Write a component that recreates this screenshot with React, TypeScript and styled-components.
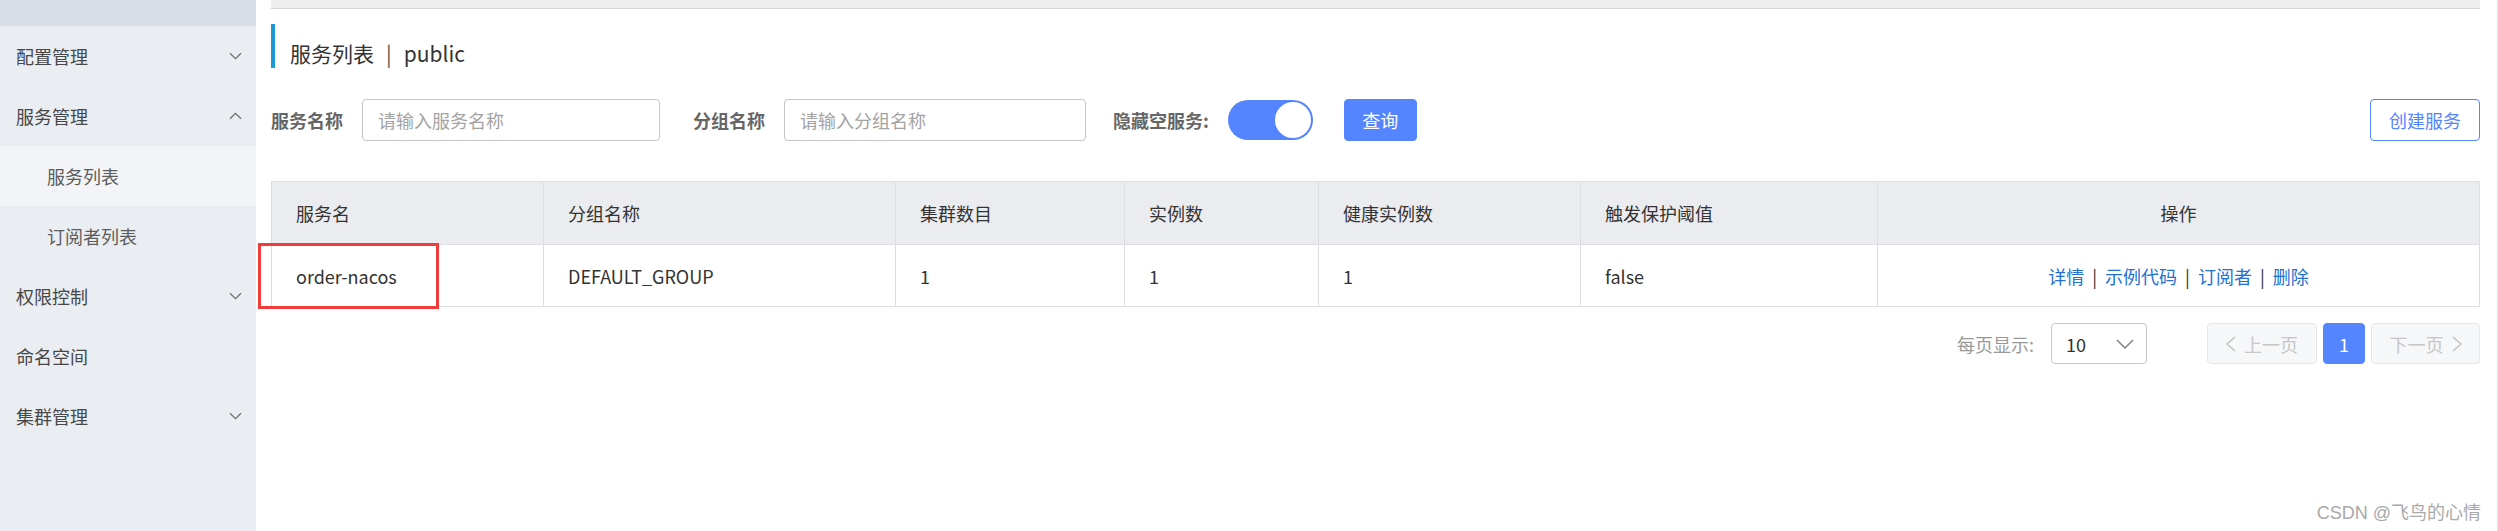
import React from "react";
import styled, { createGlobalStyle } from "styled-components";

const GlobalStyle = createGlobalStyle`
  html, body { margin: 0; padding: 0; background: #fff; }
  body { font-family: "Noto Sans CJK SC", "Noto Sans", sans-serif; }
  * { box-sizing: border-box; }
`;

const Page = styled.div`
  position: relative;
  display: flex;
  width: 2498px;
  height: 531px;
  overflow: hidden;
  background: #fff;
  border-right: 1px solid #e2e2e2;
`;

const Sidebar = styled.nav`
  width: 256px;
  flex: none;
  background: #eaedf1;
  display: flex;
  flex-direction: column;
`;

const SideTop = styled.div`
  height: 26px;
  background: #d9dde5;
`;

const MenuItem = styled.div<{ $sub?: boolean; $active?: boolean }>`
  height: 60px;
  display: flex;
  align-items: center;
  justify-content: space-between;
  padding: 0 14px 0 ${(p) => (p.$sub ? "47px" : "16px")};
  font-size: 18px;
  color: ${(p) => (p.$sub ? "#5c5c5c" : "#474747")};
  background: ${(p) => (p.$active ? "#f3f4f7" : "transparent")};
`;

const Chevron = ({ up = false }: { up?: boolean }) => (
  <svg width="13" height="8" viewBox="0 0 13 8" style={{ transform: up ? "rotate(180deg)" : undefined }}>
    <polyline points="1,1.2 6.5,6.6 12,1.2" fill="none" stroke="#6b6b6b" strokeWidth="1.2" />
  </svg>
);

const Main = styled.main`
  flex: 1;
  min-width: 0;
  display: flex;
  flex-direction: column;
  padding: 0 17px 0 15px;
`;

const TopBar = styled.div`
  height: 9px;
  background: #eeeeee;
  border-bottom: 1px solid #d6d6d6;
`;

const Title = styled.h1`
  margin: 15px 0 0;
  height: 44px;
  border-left: 4px solid #1a9bd5;
  padding: 15px 0 0 15px;
  font-size: 21px;
  line-height: 28px;
  font-weight: normal;
  color: #333;
`;

const TitleSep = styled.span`
  margin: 0 12px;
  color: #555;
`;

const FilterRow = styled.div`
  margin-top: 31px;
  height: 42px;
  display: flex;
  align-items: center;
`;

const Label = styled.span<{ $gap?: number }>`
  margin-left: ${(p) => p.$gap ?? 0}px;
  margin-right: 19px;
  font-size: 18px;
  font-weight: bold;
  color: #666;
  white-space: nowrap;
`;

const TextInput = styled.input<{ $w: number }>`
  width: ${(p) => p.$w}px;
  height: 42px;
  border: 1px solid #c4c6cf;
  border-radius: 4px;
  padding: 0 15px;
  font-size: 18px;
  font-family: inherit;
  color: #333;
  outline: none;
  &::placeholder { color: #a3a3a3; }
`;

const Switch = styled.div`
  position: relative;
  width: 85px;
  height: 40px;
  border-radius: 20px;
  background: #5584ff;
  flex: none;
  &::after {
    content: "";
    position: absolute;
    right: 2px;
    top: 2px;
    width: 36px;
    height: 36px;
    border-radius: 50%;
    background: #fff;
  }
`;

const Button = styled.button<{ $primary?: boolean; $w: number; $gap?: string }>`
  margin-left: ${(p) => p.$gap ?? "0"};
  width: ${(p) => p.$w}px;
  height: 42px;
  border-radius: 4px;
  font-size: 18px;
  font-family: inherit;
  cursor: pointer;
  border: 1px solid #5584ff;
  background: ${(p) => (p.$primary ? "#5584ff" : "#fff")};
  color: ${(p) => (p.$primary ? "#fff" : "#5584ff")};
  padding: 0;
`;

const Table = styled.table`
  margin-top: 40px;
  width: 100%;
  table-layout: fixed;
  border-collapse: collapse;
  font-size: 18px;
`;

const Th = styled.th<{ $center?: boolean }>`
  height: 63px;
  background: #ebecf0;
  border: 1px solid #dcdee3;
  padding: 0 0 0 ${(p) => (p.$center ? "0" : "24px")};
  text-align: ${(p) => (p.$center ? "center" : "left")};
  font-weight: normal;
  color: #333;
`;

const Td = styled.td<{ $center?: boolean }>`
  position: relative;
  height: 62px;
  border: 1px solid #dcdee3;
  padding: 0 0 0 ${(p) => (p.$center ? "0" : "24px")};
  text-align: ${(p) => (p.$center ? "center" : "left")};
  color: #333;
`;

const Highlight = styled.div`
  position: absolute;
  left: -14px;
  top: -2px;
  width: 181px;
  height: 66px;
  border: 3px solid #f23b3b;
`;

const Link = styled.a`
  color: #2471d0;
  text-decoration: none;
`;

const LinkSep = styled.span`
  margin: 0 8px;
  color: #333;
`;

const Pager = styled.div`
  margin-top: 16px;
  display: flex;
  justify-content: flex-end;
  align-items: center;
  gap: 6px;
  font-size: 18px;
`;

const PageSizeLabel = styled.span`
  color: #999;
  margin-right: 11px;
`;

const Select = styled.div`
  width: 96px;
  height: 41px;
  border: 1px solid #c4c6cf;
  border-radius: 4px;
  display: flex;
  align-items: center;
  justify-content: space-between;
  padding: 0 12px 0 14px;
  color: #333;
  margin-right: 54px;
`;

const PageBtn = styled.div<{ $current?: boolean; $w: number }>`
  width: ${(p) => p.$w}px;
  height: 41px;
  border-radius: 4px;
  display: flex;
  align-items: center;
  justify-content: center;
  gap: 8px;
  border: 1px solid ${(p) => (p.$current ? "#5584ff" : "#e4e6ea")};
  background: ${(p) => (p.$current ? "#5584ff" : "#f6f7f9")};
  color: ${(p) => (p.$current ? "#fff" : "#c6c6c6")};
`;

const Watermark = styled.div`
  position: absolute;
  right: 16px;
  bottom: 7px;
  font-size: 18px;
  color: #a9a9a9;
  font-family: "Liberation Sans", "Noto Sans CJK SC", sans-serif;
  text-shadow: 0 0 1px #fff;
`;

const Arrow = ({ dir, color, w = 10, h = 16 }: { dir: "left" | "right" | "down"; color: string; w?: number; h?: number }) => {
  const pts =
    dir === "left" ? `${w - 1},1 1,${h / 2} ${w - 1},${h - 1}` : dir === "right" ? `1,1 ${w - 1},${h / 2} 1,${h - 1}` : `1,1 ${w / 2},${h - 1} ${w - 1},1`;
  return (
    <svg width={w} height={h} viewBox={`0 0 ${w} ${h}`}>
      <polyline points={pts} fill="none" stroke={color} strokeWidth="1.6" />
    </svg>
  );
};

const menu = [
  { label: "配置管理", chevron: "down" },
  { label: "服务管理", chevron: "up" },
  { label: "服务列表", sub: true, active: true },
  { label: "订阅者列表", sub: true },
  { label: "权限控制", chevron: "down" },
  { label: "命名空间" },
  { label: "集群管理", chevron: "down" },
];

const cols = [272, 352, 229, 194, 262, 297];

export default function App() {
  return (
    <>
      <GlobalStyle />
      <Page>
        <Sidebar>
          <SideTop />
          {menu.map((m) => (
            <MenuItem key={m.label} $sub={m.sub} $active={m.active}>
              <span>{m.label}</span>
              {m.chevron && <Chevron up={m.chevron === "up"} />}
            </MenuItem>
          ))}
        </Sidebar>
        <Main>
          <TopBar />
          <Title>
            服务列表<TitleSep>|</TitleSep>public
          </Title>
          <FilterRow>
            <Label>服务名称</Label>
            <TextInput $w={298} placeholder="请输入服务名称" />
            <Label $gap={33}>分组名称</Label>
            <TextInput $w={302} placeholder="请输入分组名称" />
            <Label $gap={27}>隐藏空服务:</Label>
            <Switch />
            <Button $primary $w={73} $gap="31px">查询</Button>
            <Button $w={110} $gap="auto">创建服务</Button>
          </FilterRow>
          <Table>
            <colgroup>
              {cols.map((w, i) => (
                <col key={i} style={{ width: w }} />
              ))}
              <col />
            </colgroup>
            <thead>
              <tr>
                <Th>服务名</Th>
                <Th>分组名称</Th>
                <Th>集群数目</Th>
                <Th>实例数</Th>
                <Th>健康实例数</Th>
                <Th>触发保护阈值</Th>
                <Th $center>操作</Th>
              </tr>
            </thead>
            <tbody>
              <tr>
                <Td>
                  order-nacos
                  <Highlight />
                </Td>
                <Td>DEFAULT_GROUP</Td>
                <Td>1</Td>
                <Td>1</Td>
                <Td>1</Td>
                <Td>false</Td>
                <Td $center>
                  <Link>详情</Link>
                  <LinkSep>|</LinkSep>
                  <Link>示例代码</Link>
                  <LinkSep>|</LinkSep>
                  <Link>订阅者</Link>
                  <LinkSep>|</LinkSep>
                  <Link>删除</Link>
                </Td>
              </tr>
            </tbody>
          </Table>
          <Pager>
            <PageSizeLabel>每页显示:</PageSizeLabel>
            <Select>
              <span>10</span>
              <Arrow dir="down" color="#888" w={18} h={10} />
            </Select>
            <PageBtn $w={110}>
              <Arrow dir="left" color="#c6c6c6" />
              <span>上一页</span>
            </PageBtn>
            <PageBtn $current $w={42}>1</PageBtn>
            <PageBtn $w={109}>
              <span>下一页</span>
              <Arrow dir="right" color="#c6c6c6" />
            </PageBtn>
          </Pager>
        </Main>
        <Watermark>CSDN @飞鸟的心情</Watermark>
      </Page>
    </>
  );
}
